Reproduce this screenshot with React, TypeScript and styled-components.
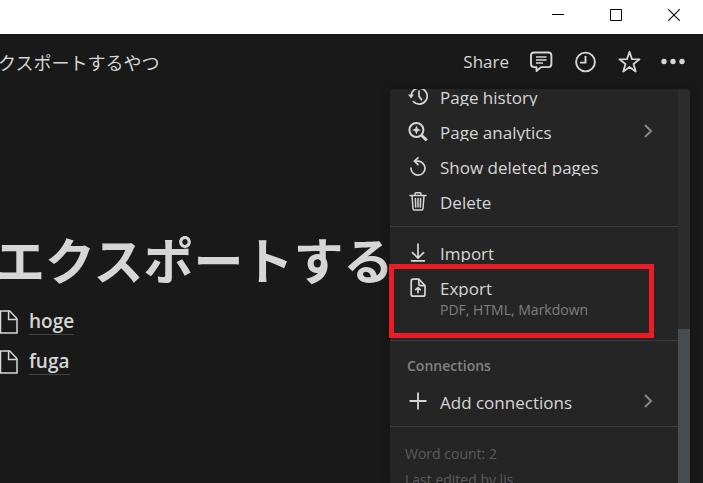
import React from "react";
import styled, { createGlobalStyle } from "styled-components";

const GlobalStyle = createGlobalStyle`
  *, *::before, *::after { box-sizing: border-box; }
  html, body, #root { height: 100%; margin: 0; }
  body {
    background: #191919;
    color: #d6d6d6;
    font-family: "Open Sans", "Noto Sans CJK JP", sans-serif;
    font-size: 17px;
    overflow: hidden;
  }
  button { font: inherit; color: inherit; background: none; border: 0; padding: 0; cursor: pointer; }
  svg { display: block; flex: none; }
`;

const Window = styled.div`
  display: flex;
  flex-direction: column;
  height: 100vh;
  overflow: hidden;
`;

const TitleBar = styled.div`
  display: flex;
  flex: none;
  justify-content: flex-end;
  height: 34px;
  background: #fff;
  color: #000;
`;

const CaptionButton = styled.button`
  display: flex;
  justify-content: center;
  width: 58px;
  padding-top: 9px;
`;

const Client = styled.div`
  position: relative;
  flex: 1;
  min-height: 0;
`;

const TopBar = styled.header`
  display: flex;
  align-items: center;
  justify-content: space-between;
  height: 56px;
  padding-right: 18px;
`;

const Crumb = styled.div`
  margin-left: -20px;
  font-size: 18px;
  font-family: "Noto Sans CJK JP", sans-serif;
  font-weight: 400;
  line-height: 24px;
  white-space: nowrap;
`;

const Actions = styled.div`
  display: flex;
  align-items: center;
  gap: 20px;
`;

const IconButton = styled.button`
  display: flex;
`;

const ShareButton = styled.button`
  font-size: 17px;
  line-height: 24px;
`;

const Page = styled.main`
  padding-top: 136px;
`;

const Heading = styled.h1`
  margin: 0 0 0 -5px;
  font-family: "Noto Sans CJK JP", sans-serif;
  font-size: 50px;
  font-weight: 700;
  line-height: 64px;
  white-space: nowrap;
`;

const PageList = styled.div`
  display: flex;
  flex-direction: column;
  align-items: flex-start;
  padding-top: 12px;
`;

const PageLink = styled.a`
  display: flex;
  align-items: center;
  gap: 11px;
  height: 40px;
  margin-left: -1px;
  color: inherit;
  font-size: 19px;
  font-weight: 600;
  text-decoration: none;
  span { line-height: 25px; border-bottom: 1px solid #444; }
`;

const Menu = styled.div`
  position: absolute;
  top: 55px;
  right: 13px;
  bottom: 0;
  width: 300px;
`;

const MenuPanel = styled.div`
  display: flex;
  height: 100%;
  overflow: hidden;
  border-radius: 4px 4px 0 0;
  background: #252525;
  box-shadow: 0 0 10px rgba(0, 0, 0, 0.3);
`;

const MenuScroll = styled.div`
  flex: 1;
  min-width: 0;
  height: 100%;
  overflow: hidden;
`;

const Scrollbar = styled.div`
  display: flex;
  flex-direction: column;
  justify-content: flex-end;
  width: 12px;
  background: #2c2c2c;
`;

const Thumb = styled.div`
  height: 39%;
  background: #474c50;
`;

const Group = styled.div<{ $pull?: boolean }>`
  padding: 9px 0 6px;
  margin-top: ${(p) => (p.$pull ? "-18px" : "0")};
  border-bottom: 1px solid #3b3b3b;
`;

const Item = styled.button<{ $tall?: boolean }>`
  display: flex;
  align-items: flex-start;
  width: 100%;
  height: ${(p) => (p.$tall ? "63px" : "35px")};
  padding: 7px 24px 0 18px;
  text-align: left;
  gap: 12px;
`;

const ItemText = styled.span`
  flex: 1;
  min-width: 0;
`;

const Label = styled.span`
  display: block;
  height: 19px;
  line-height: 21px;
  overflow: hidden;
  white-space: nowrap;
`;

const Hint = styled.span`
  display: block;
  color: #7f7f7f;
  font-size: 14px;
  line-height: 22px;
  padding-top: 2px;
`;

const SectionTitle = styled.div`
  padding: 6px 17px 9px;
  color: #828282;
  font-size: 14px;
  font-weight: 600;
  line-height: 20px;
`;

const Footer = styled.div`
  padding: 14px 15px 0;
  color: #5c5c5c;
  font-size: 14px;
  line-height: 26px;
`;

const Highlight = styled.div`
  position: absolute;
  top: 175px;
  left: -1px;
  right: 36px;
  height: 74px;
  border: 5px solid #ec1c24;
  pointer-events: none;
`;

type IconProps = { size?: number; children: React.ReactNode; w?: number };
const Icon = ({ size = 20, w = 1.6, children }: IconProps) => (
  <svg width={size} height={size} viewBox={`0 0 ${size} ${size}`} fill="none" stroke="currentColor" strokeWidth={w} aria-hidden="true">
    {children}
  </svg>
);

const HistoryIcon = () => (
  <Icon w={1.7}>
    <path d="M3.2 9A8 8 0 1 1 5.4 14.6" strokeLinecap="round" />
    <path d="M0 7.4h6L3 11.4z" fill="currentColor" stroke="none" />
    <path d="M11 4.2v5.2l2.6 3.2" strokeLinecap="round" />
  </Icon>
);
const AnalyticsIcon = () => (
  <Icon w={2}>
    <circle cx="8.4" cy="8" r="7" />
    <path d="M13.2 13l5.6 5.4" strokeWidth="3" />
    <path d="M8.4 3.6l1.3 3.1 3.1 1.3-3.1 1.3-1.3 3.1-1.3-3.1L4 8l3.100-1.300z" fill="currentColor" stroke="none" />
  </Icon>
);
const UndoIcon = () => (
  <Icon w={1.7}>
    <path d="M3 11.2A7 7 0 1 0 9.6 4.2H7" strokeLinecap="round" />
    <path d="M10 .8L6.4 4.2l3.6 3.4" strokeLinecap="round" strokeLinejoin="round" />
  </Icon>
);
const TrashIcon = () => (
  <Icon w={1.5}>
    <path d="M2 3.500h16M4 3.500l1 13.200q.1 1.300 1.400 1.300h7.200q1.300 0 1.400-1.300L16 3.500M7 3.500V1.800q0-1 1-1h4q1 0 1 1v1.700M7.400 6.500l.3 8.600M10 6.500v8.600M12.600 6.500l-.3 8.600" strokeLinecap="round" />
  </Icon>
);
const ImportIcon = () => (
  <Icon w={1.7}>
    <path d="M10 1v13M4.4 9.6L10 15l5.6-5.4M3.600 17.800h12.800" strokeLinecap="round" />
  </Icon>
);
const ExportIcon = () => (
  <Icon w={1.7}>
    <path d="M5.2 1.2h5.600L17 7.600v8.600q0 2-2 2H5.200q-2 0-2-2V3.200q0-2 2-2z" strokeLinejoin="round" />
    <path d="M10.800 1.400v4.200q0 2 2 2H17M10 15.200v-5M7.200 12.200L10 9.600l2.800 2.600" />
  </Icon>
);
const PlusIcon = () => (
  <Icon w={1.8}>
    <path d="M10 .5v17M1.500 9h17" />
  </Icon>
);
const Chevron = () => (
  <svg width="10" height="18" viewBox="0 0 10 18" fill="none" stroke="#858585" strokeWidth="2" aria-hidden="true">
    <path d="M1 3l6 6-6 6" />
  </svg>
);
const DocIcon = () => (
  <svg width="19" height="24" viewBox="0 0 19 24" fill="none" stroke="currentColor" strokeWidth="1.5" aria-hidden="true">
    <path d="M1.500 1h9.300L18 8.800V23H1.500zM9.600 1v8.600H18" />
  </svg>
);

type EntryProps = { icon: React.ReactNode; label: string; hint?: string; arrow?: boolean };
const Entry = ({ icon, label, hint, arrow }: EntryProps) => (
  <Item type="button" $tall={!!hint}>
    {icon}
    <ItemText>
      <Label>{label}</Label>
      {hint && <Hint>{hint}</Hint>}
    </ItemText>
    {arrow && <Chevron />}
  </Item>
);

export default function App() {
  return (
    <Window>
      <GlobalStyle />
      <TitleBar>
        <CaptionButton type="button" aria-label="Minimize">
          <Icon size={12} w={1}><path d="M0 5.5h12" /></Icon>
        </CaptionButton>
        <CaptionButton type="button" aria-label="Maximize">
          <Icon size={12} w={1}><path d="M.5.5h11v11H.5z" /></Icon>
        </CaptionButton>
        <CaptionButton type="button" aria-label="Close">
          <Icon size={12} w={1.1}><path d="M.3.3l11.4 11.4M11.7.3L.3 11.7" /></Icon>
        </CaptionButton>
      </TitleBar>
      <Client>
        <TopBar>
          <Crumb>エクスポートするやつ</Crumb>
          <Actions>
            <ShareButton type="button">Share</ShareButton>
            <IconButton type="button" aria-label="Comments">
              <Icon size={24} w={1.9}>
                <path d="M5 2.500h14.400q3 0 3 3v8.600q0 3-3 3h-7.400L7.500 21v-3.900H5q-3 0-3-3V5.500q0-3 3-3z" strokeLinejoin="round" />
                <path d="M7 7h10.500M7 10h10.500M7 13h7" strokeWidth="1.3" />
              </Icon>
            </IconButton>
            <IconButton type="button" aria-label="Updates">
              <Icon size={24} w={1.9}>
                <circle cx="12.5" cy="12" r="9.4" />
                <path d="M12.500 6v6.600H7" />
              </Icon>
            </IconButton>
            <IconButton type="button" aria-label="Favorite">
              <Icon size={24} w={1.8}>
                <path d="M12.500 1.800l2.500 7.400 7.500.2-6 4.600 2.200 7.600-6.200-4.600-6.200 4.600L8.500 14l-6-4.600 7.500-.2z" strokeLinejoin="round" />
              </Icon>
            </IconButton>
            <IconButton type="button" aria-label="More">
              <svg width="24" height="24" viewBox="0 0 24 24" fill="currentColor" aria-hidden="true">
                <circle cx="3" cy="11.5" r="2.7" />
                <circle cx="12" cy="11.5" r="2.7" />
                <circle cx="21" cy="11.5" r="2.7" />
              </svg>
            </IconButton>
          </Actions>
        </TopBar>
        <Page>
          <Heading>エクスポートするやつ</Heading>
          <PageList>
            <PageLink href="#hoge"><DocIcon /><span>hoge</span></PageLink>
            <PageLink href="#fuga"><DocIcon /><span>fuga</span></PageLink>
          </PageList>
        </Page>
        <Menu>
          <MenuPanel>
            <MenuScroll>
              <Group $pull>
                <Entry icon={<HistoryIcon />} label="Page history" />
                <Entry icon={<AnalyticsIcon />} label="Page analytics" arrow />
                <Entry icon={<UndoIcon />} label="Show deleted pages" />
                <Entry icon={<TrashIcon />} label="Delete" />
              </Group>
              <Group>
                <Entry icon={<ImportIcon />} label="Import" />
                <Entry icon={<ExportIcon />} label="Export" hint="PDF, HTML, Markdown" />
              </Group>
              <Group>
                <SectionTitle>Connections</SectionTitle>
                <Entry icon={<PlusIcon />} label="Add connections" arrow />
              </Group>
              <Footer>
                <div>Word count: 2</div>
                <div>Last edited by lis</div>
              </Footer>
            </MenuScroll>
            <Scrollbar><Thumb /></Scrollbar>
          </MenuPanel>
          <Highlight />
        </Menu>
      </Client>
    </Window>
  );
}
